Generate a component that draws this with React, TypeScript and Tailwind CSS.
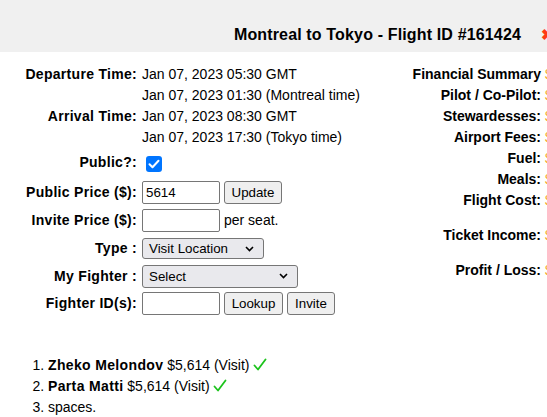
import React from 'react';

const labelCls = 'w-[137px] shrink-0 text-right font-bold tracking-[0.3px]';

const Row: React.FC<{ label?: string; h?: string; children?: React.ReactNode }> = ({ label, h = 'h-[21px]', children }) => (
  <div className={`flex items-center ${h}`}>
    <div className={labelCls}>{label}</div>
    <div className="pl-[5px] flex items-center gap-[4px]">{children}</div>
  </div>
);

const TextBox: React.FC<{ value?: string }> = ({ value }) => (
  <div className="w-[78px] h-[23px] border border-[#767676] rounded-[2px] bg-white px-[3px] text-[13.33px] leading-[21px]">{value}</div>
);

const Btn: React.FC<{ label: string; w: string }> = ({ label, w }) => (
  <div className={`${w} h-[23px] border border-[#767676] rounded-[3px] bg-[#efefef] text-[13.33px] leading-[21px] text-center`}>{label}</div>
);

const Chevron = () => (
  <svg width="9" height="6" viewBox="0 0 9 6" fill="none">
    <path d="M1 1l3.5 3.5L8 1" stroke="#000" strokeWidth="1.6" />
  </svg>
);

const Check = () => (
  <svg width="14" height="13" viewBox="0 0 14 13" fill="none" className="inline-block align-[-1px]">
    <path d="M1.5 7.5l3.5 4L12.5 1.5" stroke="#1cc31c" strokeWidth="1.8" strokeLinecap="round" strokeLinejoin="round" />
  </svg>
);

const Select: React.FC<{ label: string; w: string; h: string }> = ({ label, w, h }) => (
  <div className={`${w} ${h} border border-[#767676] rounded-[3px] bg-[#e9e9ed] text-[13.33px] flex items-center justify-between pl-[6px] pr-[9px]`}>
    <span>{label}</span>
    <Chevron />
  </div>
);

const summary: { label: string; gap?: boolean }[] = [
  { label: 'Financial Summary' },
  { label: 'Pilot / Co-Pilot:' },
  { label: 'Stewardesses:' },
  { label: 'Airport Fees:' },
  { label: 'Fuel:' },
  { label: 'Meals:' },
  { label: 'Flight Cost:' },
  { label: 'Ticket Income:', gap: true },
  { label: 'Profit / Loss:', gap: true },
];

export default function App() {
  return (
    <div className="w-[547px] h-[417px] overflow-hidden bg-white text-black text-[14px] font-['Liberation_Sans',Arial,sans-serif]">
      <div className="w-[560px] h-[52px] bg-[#f0f0f0] flex justify-end items-start pt-[26px]">
        <div className="text-[16px] font-bold leading-[18px] tracking-[0.15px]">Montreal to Tokyo - Flight ID #161424</div>
        <div className="w-[19px] ml-[20px] text-[15px] leading-[18px] font-bold text-[#ff3a14]">✖</div>
      </div>

      <div className="w-[620px] flex pt-[11.5px]">
        <div className="w-[380px] shrink-0 leading-[21px]">
          <Row label="Departure Time:">Jan 07, 2023 05:30 GMT</Row>
          <Row>Jan 07, 2023 01:30 (Montreal time)</Row>
          <Row label="Arrival Time:">Jan 07, 2023 08:30 GMT</Row>
          <Row>Jan 07, 2023 17:30 (Tokyo time)</Row>
          <Row label="Public?:" h="h-[30px]">
            <div className="ml-[4px] mt-[2px] w-[16px] h-[16px] rounded-[3px] bg-[#0075ff] flex items-center justify-center">
              <svg width="12" height="10" viewBox="0 0 12 10" fill="none">
                <path d="M1.5 5.2l3 3L10.5 1.8" stroke="#fff" strokeWidth="2" strokeLinecap="round" strokeLinejoin="round" />
              </svg>
            </div>
          </Row>
          <Row label="Public Price ($):" h="h-[29px]">
            <TextBox value="5614" />
            <Btn label="Update" w="w-[58px]" />
          </Row>
          <Row label="Invite Price ($):" h="h-[28px]">
            <TextBox />
            <span>per seat.</span>
          </Row>
          <Row label="Type :" h="h-[28px]">
            <Select label="Visit Location" w="w-[122px]" h="h-[21px]" />
          </Row>
          <Row label="My Fighter :" h="h-[27px]">
            <Select label="Select" w="w-[156px]" h="h-[23px]" />
          </Row>
          <Row label="Fighter ID(s):" h="h-[28px]">
            <TextBox />
            <Btn label="Lookup" w="w-[59px]" />
            <Btn label="Invite" w="w-[48px]" />
          </Row>

          <ol className="list-decimal pl-[48px] mt-[37px]">
            <li>
              <b className="tracking-[0.35px]">Zheko Melondov</b> $5,614 (Visit) <Check />
            </li>
            <li>
              <b className="tracking-[0.35px]">Parta Matti</b> $5,614 (Visit) <Check />
            </li>
            <li>spaces.</li>
          </ol>
        </div>

        <div className="leading-[21px]">
          {summary.map(s => (
            <div key={s.label} className={`flex ${s.gap ? 'mt-[14px]' : ''}`}>
              <div className="w-[161px] text-right font-bold">{s.label}</div>
              <div className="pl-[4px] text-[#f5a623]">$0</div>
            </div>
          ))}
        </div>
      </div>
    </div>
  );
}
